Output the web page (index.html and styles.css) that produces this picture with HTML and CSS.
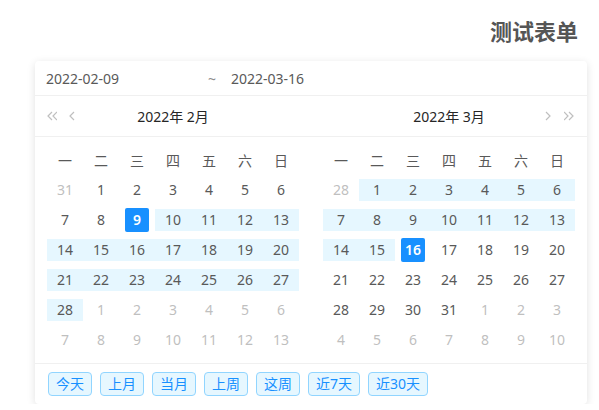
FILE: index.html
```html
<!DOCTYPE html>
<html lang="zh">

<head>
    <meta charset="UTF-8">
    <meta name="viewport" content="width=device-width, initial-scale=1.0">
    <title>测试表单</title>
    <link rel="stylesheet" href="styles.css">
</head>

<body>
    <h2 class="title">测试表单</h2>

    <div class="picker">
        <div class="inputs">
            <span class="date-start">2022-02-09</span>
            <span class="sep">~</span>
            <span class="date-end">2022-03-16</span>
        </div>

        <div class="panels">
            <!-- 2月 -->
            <div class="panel">
                <div class="head">
                    <div class="arrows">
                        <svg width="10" height="10" viewBox="0 0 10 10"><polyline points="5,1 1,5 5,9" /><polyline points="10,1 6,5 10,9" /></svg>
                        <svg class="single" width="6" height="10" viewBox="0 0 6 10"><polyline points="5,1 1,5 5,9" /></svg>
                    </div>
                    <div class="month">2022年 2月</div>
                    <div class="arrows"></div>
                </div>
                <div class="body">
                    <div class="grid">
                        <span class="wk">一</span><span class="wk">二</span><span class="wk">三</span><span class="wk">四</span><span class="wk">五</span><span class="wk">六</span><span class="wk">日</span>

                        <span class="cell dim"><i>31</i></span><span class="cell"><i>1</i></span><span class="cell"><i>2</i></span><span class="cell"><i>3</i></span><span class="cell"><i>4</i></span><span class="cell"><i>5</i></span><span class="cell"><i>6</i></span>

                        <span class="cell"><i>7</i></span><span class="cell"><i>8</i></span><span class="cell sel"><i>9</i></span><span class="cell in"><i>10</i></span><span class="cell in"><i>11</i></span><span class="cell in"><i>12</i></span><span class="cell in"><i>13</i></span>

                        <span class="cell in"><i>14</i></span><span class="cell in"><i>15</i></span><span class="cell in"><i>16</i></span><span class="cell in"><i>17</i></span><span class="cell in"><i>18</i></span><span class="cell in"><i>19</i></span><span class="cell in"><i>20</i></span>

                        <span class="cell in"><i>21</i></span><span class="cell in"><i>22</i></span><span class="cell in"><i>23</i></span><span class="cell in"><i>24</i></span><span class="cell in"><i>25</i></span><span class="cell in"><i>26</i></span><span class="cell in"><i>27</i></span>

                        <span class="cell in"><i>28</i></span><span class="cell dim"><i>1</i></span><span class="cell dim"><i>2</i></span><span class="cell dim"><i>3</i></span><span class="cell dim"><i>4</i></span><span class="cell dim"><i>5</i></span><span class="cell dim"><i>6</i></span>

                        <span class="cell dim"><i>7</i></span><span class="cell dim"><i>8</i></span><span class="cell dim"><i>9</i></span><span class="cell dim"><i>10</i></span><span class="cell dim"><i>11</i></span><span class="cell dim"><i>12</i></span><span class="cell dim"><i>13</i></span>
                    </div>
                </div>
            </div>

            <!-- 3月 -->
            <div class="panel">
                <div class="head">
                    <div class="arrows"></div>
                    <div class="month">2022年 3月</div>
                    <div class="arrows right">
                        <svg class="single" width="6" height="10" viewBox="0 0 6 10"><polyline points="1,1 5,5 1,9" /></svg>
                        <svg width="10" height="10" viewBox="0 0 10 10"><polyline points="0,1 4,5 0,9" /><polyline points="5,1 9,5 5,9" /></svg>
                    </div>
                </div>
                <div class="body">
                    <div class="grid">
                        <span class="wk">一</span><span class="wk">二</span><span class="wk">三</span><span class="wk">四</span><span class="wk">五</span><span class="wk">六</span><span class="wk">日</span>

                        <span class="cell dim"><i>28</i></span><span class="cell in"><i>1</i></span><span class="cell in"><i>2</i></span><span class="cell in"><i>3</i></span><span class="cell in"><i>4</i></span><span class="cell in"><i>5</i></span><span class="cell in"><i>6</i></span>

                        <span class="cell in"><i>7</i></span><span class="cell in"><i>8</i></span><span class="cell in"><i>9</i></span><span class="cell in"><i>10</i></span><span class="cell in"><i>11</i></span><span class="cell in"><i>12</i></span><span class="cell in"><i>13</i></span>

                        <span class="cell in"><i>14</i></span><span class="cell in"><i>15</i></span><span class="cell sel"><i>16</i></span><span class="cell"><i>17</i></span><span class="cell"><i>18</i></span><span class="cell"><i>19</i></span><span class="cell"><i>20</i></span>

                        <span class="cell"><i>21</i></span><span class="cell"><i>22</i></span><span class="cell"><i>23</i></span><span class="cell"><i>24</i></span><span class="cell"><i>25</i></span><span class="cell"><i>26</i></span><span class="cell"><i>27</i></span>

                        <span class="cell"><i>28</i></span><span class="cell"><i>29</i></span><span class="cell"><i>30</i></span><span class="cell"><i>31</i></span><span class="cell dim"><i>1</i></span><span class="cell dim"><i>2</i></span><span class="cell dim"><i>3</i></span>

                        <span class="cell dim"><i>4</i></span><span class="cell dim"><i>5</i></span><span class="cell dim"><i>6</i></span><span class="cell dim"><i>7</i></span><span class="cell dim"><i>8</i></span><span class="cell dim"><i>9</i></span><span class="cell dim"><i>10</i></span>
                    </div>
                </div>
            </div>
        </div>

        <div class="footer">
            <span class="tag">今天</span>
            <span class="tag">上月</span>
            <span class="tag">当月</span>
            <span class="tag">上周</span>
            <span class="tag">这周</span>
            <span class="tag">近7天</span>
            <span class="tag">近30天</span>
        </div>
    </div>
</body>

</html>
```

FILE: styles.css
```css
* {
    margin: 0;
    padding: 0;
    box-sizing: border-box;
}

body {
    font-family: "Noto Sans", "Noto Sans CJK SC", sans-serif;
    font-size: 14px;
    color: #595959;
    background: #fff;
}

.title {
    height: 30px;
    margin-top: 16px;
    margin-bottom: 15px;
    padding-right: 21px;
    text-align: right;
    font-size: 22px;
    line-height: 30px;
    font-weight: bold;
    color: #555;
}

.picker {
    width: 552px;
    margin-left: 35px;
    background: #fff;
    border-radius: 4px;
    box-shadow: 0 2px 8px rgba(0, 0, 0, 0.12);
}

.inputs {
    display: flex;
    align-items: center;
    height: 35px;
    padding-left: 11px;
    border-bottom: 1px solid #f0f0f0;
    color: #595959;
}

.date-start {
    width: 162px;
}

.sep {
    width: 23px;
    color: #8c8c8c;
}

.panels {
    display: flex;
}

.panel {
    width: 276px;
}

.head {
    display: flex;
    align-items: center;
    height: 41px;
    padding: 0 12px;
    border-bottom: 1px solid #f0f0f0;
}

.month {
    flex: 1;
    text-align: center;
    color: #262626;
}

.arrows {
    display: flex;
    align-items: center;
    width: 40px;
}

.arrows.right {
    justify-content: flex-end;
    padding-right: 1px;
}

.arrows svg {
    fill: none;
    stroke: #bfbfbf;
    stroke-width: 1.2;
}

.arrows .single {
    margin: 0 12px;
}

.arrows.right .single {
    margin: 0 13px 0 0;
}

.body {
    padding: 8px 12px;
}

.grid {
    display: grid;
    grid-template-columns: repeat(7, 36px);
    grid-auto-rows: 30px;
}

.wk,
.cell {
    display: flex;
    align-items: center;
    justify-content: center;
    position: relative;
}

.cell i {
    position: relative;
    font-style: normal;
    display: inline-block;
    min-width: 24px;
    height: 24px;
    line-height: 24px;
    text-align: center;
    border-radius: 2px;
}

.cell.in::before {
    content: "";
    position: absolute;
    left: 0;
    right: 0;
    top: 4px;
    height: 22px;
    background: #e6f7ff;
}

.cell.dim {
    color: #bfbfbf;
}

.cell.sel i {
    background: #1890ff;
    color: #fff;
    font-weight: 600;
}

.footer {
    display: flex;
    gap: 8px;
    padding: 8px 13px;
    border-top: 1px solid #f0f0f0;
}

.tag {
    height: 24px;
    line-height: 22px;
    padding: 0 7px;
    border: 1px solid #91d5ff;
    border-radius: 4px;
    background: #e6f7ff;
    color: #1890ff;
}
```
